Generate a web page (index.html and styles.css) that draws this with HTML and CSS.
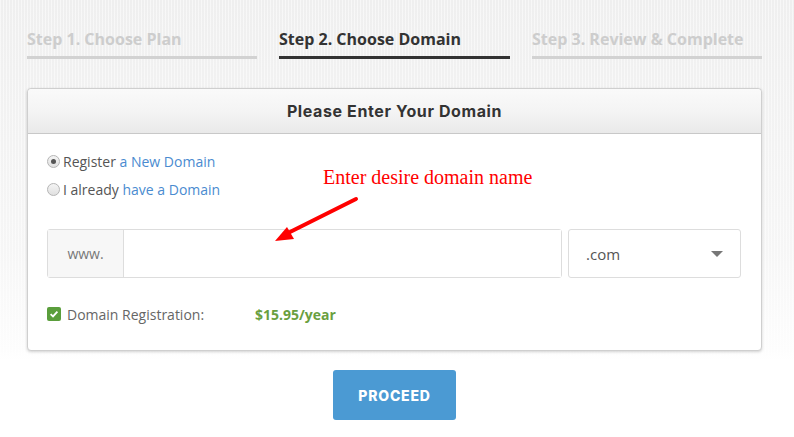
FILE: index.html
```html
<!DOCTYPE html>
<html lang="en">
<head>
    <meta charset="UTF-8">
    <meta name="viewport" content="width=device-width, initial-scale=1.0">
    <title>Choose Domain</title>
    <link rel="stylesheet" href="styles.css">
</head>
<body>
    <div class="wrap">
        <div class="steps">
            <div class="step">Step 1. Choose Plan</div>
            <div class="step active">Step 2. Choose Domain</div>
            <div class="step">Step 3. Review &amp; Complete</div>
        </div>

        <div class="card">
            <div class="card-head">Please Enter Your Domain</div>
            <div class="card-body">
                <label class="radio-row">
                    <span class="radio checked"></span>
                    <span>Register <a href="#">a New Domain</a></span>
                </label>
                <label class="radio-row">
                    <span class="radio"></span>
                    <span>I already <a href="#">have a Domain</a></span>
                </label>

                <div class="domain-row">
                    <div class="input-group">
                        <span class="addon">www.</span>
                        <input type="text" class="domain-input">
                    </div>
                    <div class="select">
                        <span>.com</span>
                        <span class="caret"></span>
                    </div>
                </div>

                <div class="reg-row">
                    <span class="check">
                        <svg width="10" height="10" viewBox="0 0 10 10"><path d="M1.6 5.2 L4 7.4 L8.4 2.6" fill="none" stroke="#fff" stroke-width="1.8"/></svg>
                    </span>
                    <span class="reg-label">Domain Registration:</span>
                    <span class="price">$15.95/year</span>
                </div>

                <div class="note">Enter desire domain name</div>
                <svg class="arrow" width="100" height="60" viewBox="0 0 100 60">
                    <line x1="96" y1="10" x2="26" y2="45" stroke="#ff0000" stroke-width="4" stroke-linecap="round"/>
                    <polygon points="15,52 27,38 34,50" fill="#ff0000"/>
                </svg>
            </div>
        </div>

        <div class="actions">
            <button class="proceed">PROCEED</button>
        </div>
    </div>
</body>
</html>
```

FILE: styles.css
```css
body {
    margin: 0;
    font-family: 'Open Sans', sans-serif;
    background-color: #fff;
    background-image:
        repeating-linear-gradient(90deg, rgba(255,255,255,0.5) 0, rgba(255,255,255,0.5) 1px, transparent 1px, transparent 3px),
        linear-gradient(#efefef, #f6f6f6 250px, #fdfdfd 350px, #fff 360px);
    height: 437px;
    overflow: hidden;
}

.wrap {
    width: 735px;
    margin-left: 27px;
}

.steps {
    display: grid;
    grid-template-columns: 230px 231px 230px;
    column-gap: 22px;
    padding-top: 28px;
}

.step {
    font-size: 16px;
    font-weight: 700;
    line-height: 22px;
    color: #cdcdcd;
    padding-bottom: 6px;
    border-bottom: 3px solid #d2d2d2;
}

.step.active {
    color: #333;
    border-bottom-color: #333;
}

.card {
    margin-top: 29px;
    background: #fff;
    border: 1px solid #cfcfcf;
    border-radius: 4px;
    box-shadow: 0 1px 3px rgba(0, 0, 0, 0.18);
}

.card-head {
    height: 44px;
    line-height: 44px;
    text-align: center;
    font-family: 'Inter', sans-serif;
    font-size: 16px;
    font-weight: 700;
    letter-spacing: 0.6px;
    color: #333;
    background: linear-gradient(#fafafa, #f4f4f4 50%, #e9e9e9);
    border-bottom: 1px solid #c8c8c8;
    border-radius: 4px 4px 0 0;
}

.card-body {
    position: relative;
    padding: 13px 20px 26px 19px;
}

.radio-row {
    display: flex;
    align-items: center;
    height: 28px;
    font-size: 14px;
    color: #555;
}

.radio-row a {
    color: #4a8bd0;
    text-decoration: none;
}

.radio {
    width: 11px;
    height: 11px;
    border: 1px solid #b5b5b5;
    border-radius: 50%;
    background: linear-gradient(#f4f4f4, #e0e0e0);
    margin-right: 3px;
    position: relative;
}

.radio.checked::after {
    content: "";
    position: absolute;
    left: 3px;
    top: 3px;
    width: 5px;
    height: 5px;
    border-radius: 50%;
    background: #555;
}

.domain-row {
    display: flex;
    gap: 6px;
    margin-top: 26px;
}

.input-group {
    display: flex;
    width: 515px;
    height: 49px;
    border: 1px solid #ddd;
    border-radius: 3px;
    box-sizing: border-box;
}

.addon {
    width: 75px;
    background: #f7f7f7;
    border-right: 1px solid #ddd;
    color: #777;
    font-size: 14px;
    display: flex;
    align-items: center;
    justify-content: center;
}

.domain-input {
    flex: 1;
    border: none;
    outline: none;
    background: #fff;
}

.select {
    width: 173px;
    height: 49px;
    box-sizing: border-box;
    border: 1px solid #ddd;
    border-radius: 3px;
    display: flex;
    align-items: center;
    justify-content: space-between;
    padding: 0 17px 0 17px;
    font-size: 15px;
    color: #555;
}

.caret {
    width: 0;
    height: 0;
    border-left: 6px solid transparent;
    border-right: 6px solid transparent;
    border-top: 6px solid #777;
}

.reg-row {
    display: flex;
    align-items: center;
    height: 20px;
    margin-top: 26px;
    font-size: 14px;
}

.check {
    width: 14px;
    height: 14px;
    border-radius: 2px;
    background: #5a9e3c;
    display: flex;
    align-items: center;
    justify-content: center;
    margin-right: 6px;
}

.reg-label {
    color: #666;
    width: 188px;
}

.price {
    color: #6a9f3f;
    font-weight: 700;
}

.note {
    position: absolute;
    left: 295px;
    top: 32px;
    font-family: 'Liberation Serif', serif;
    font-size: 20px;
    color: #ff0000;
}

.arrow {
    position: absolute;
    left: 232px;
    top: 55px;
}

.actions {
    display: flex;
    justify-content: center;
    margin-top: 19px;
}

.proceed {
    width: 123px;
    height: 50px;
    background: #4b9ad3;
    color: #fff;
    border: none;
    border-radius: 3px;
    font-family: 'Inter', sans-serif;
    font-weight: 800;
    font-size: 14px;
    letter-spacing: 0.8px;
    cursor: pointer;
}
```
